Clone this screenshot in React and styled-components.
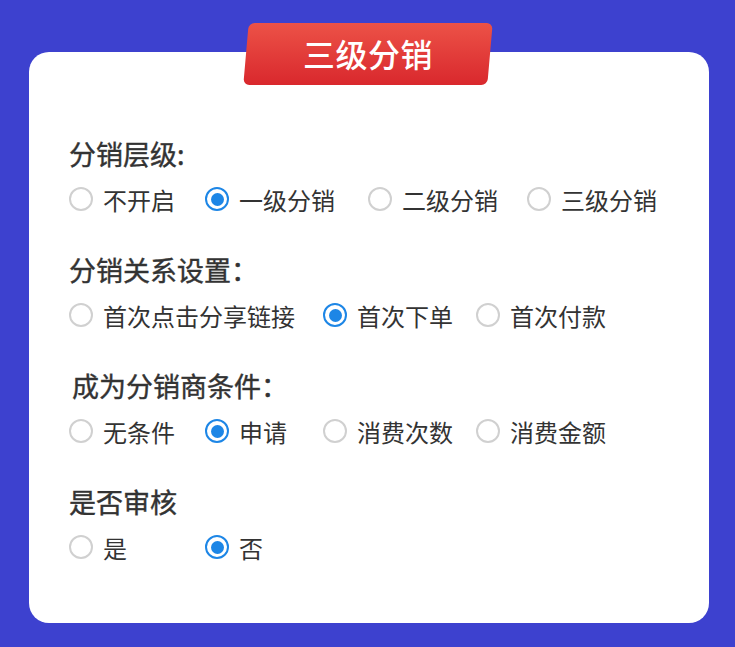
import styled, { createGlobalStyle } from "styled-components"

const Global = createGlobalStyle`
    html, body {
        margin: 0;
        padding: 0;
        background: #3d41cf;
    }
    body {
        font-family: "Noto Sans CJK SC", "Noto Sans", sans-serif;
    }
`

const Page = styled.div`
    width: 735px;
    height: 647px;
    box-sizing: border-box;
    padding: 23px 26px 24px 29px;
    background: #3d41cf;
`

const Card = styled.div`
    margin-top: 29px;
    height: 571px;
    background: #fff;
    border-radius: 20px;
    display: flex;
    flex-direction: column;
    padding: 0 40px;
    box-sizing: border-box;
`

const Banner = styled.div`
    align-self: center;
    margin-top: -29px;
    margin-left: -2px;
    width: 244px;
    height: 62px;
    border-radius: 6px;
    transform: skewX(-5deg);
    background: linear-gradient(180deg, #ec5247 0%, #d9282d 100%);
    display: flex;
    align-items: center;
    justify-content: center;
`

const BannerText = styled.span`
    transform: skewX(5deg);
    color: #fff;
    font-size: 32px;
    font-weight: 500;
    letter-spacing: 0.5px;
    line-height: 1;
    margin-top: -2px;
`

const Sections = styled.div`
    margin-top: 53px;
    display: flex;
    flex-direction: column;
    gap: 39px;
`

const Section = styled.div`
    display: flex;
    flex-direction: column;
    gap: 13px;
`

const Title = styled.div`
    height: 32px;
    line-height: 32px;
    font-size: 27px;
    font-weight: 400;
    -webkit-text-stroke: 0.4px #333;
    color: #333;
    padding-left: ${p => p.$indent ?? 0}px;
`

const Options = styled.div`
    display: flex;
    align-items: center;
    height: 32px;
`

const Option = styled.label`
    display: flex;
    align-items: center;
    gap: 10px;
    width: ${p => (p.$w ? p.$w + "px" : "auto")};
    flex-shrink: 0;
    font-size: 24px;
    color: #333;
`

const Radio = styled.span`
    width: 24px;
    height: 24px;
    box-sizing: border-box;
    border-radius: 50%;
    border: 2px solid ${p => (p.$on ? "#1d86e6" : "#d0d0d0")};
    display: flex;
    align-items: center;
    justify-content: center;
    &::after {
        content: "";
        display: ${p => (p.$on ? "block" : "none")};
        width: 13px;
        height: 13px;
        border-radius: 50%;
        background: #1d86e6;
    }
`

const groups = [
    {
        title: "分销层级:",
        options: [
            { label: "不开启", w: 136 },
            { label: "一级分销", w: 163, on: true },
            { label: "二级分销", w: 159 },
            { label: "三级分销" },
        ],
    },
    {
        title: "分销关系设置：",
        options: [
            { label: "首次点击分享链接", w: 254 },
            { label: "首次下单", w: 153, on: true },
            { label: "首次付款" },
        ],
    },
    {
        title: "成为分销商条件：",
        indent: 3,
        options: [
            { label: "无条件", w: 136 },
            { label: "申请", w: 118, on: true },
            { label: "消费次数", w: 153 },
            { label: "消费金额" },
        ],
    },
    {
        title: "是否审核",
        indent: -1,
        options: [
            { label: "是", w: 136 },
            { label: "否", on: true },
        ],
    },
]

const App = () => {
    return (
        <Page>
            <Global />
            <Card>
                <Banner>
                    <BannerText>三级分销</BannerText>
                </Banner>
                <Sections>
                    {groups.map((g, i) => (
                        <Section key={i}>
                            <Title $indent={g.indent}>{g.title}</Title>
                            <Options>
                                {g.options.map((o, j) => (
                                    <Option key={j} $w={o.w}>
                                        <Radio $on={o.on} />
                                        {o.label}
                                    </Option>
                                ))}
                            </Options>
                        </Section>
                    ))}
                </Sections>
            </Card>
        </Page>
    )
}

export default App
